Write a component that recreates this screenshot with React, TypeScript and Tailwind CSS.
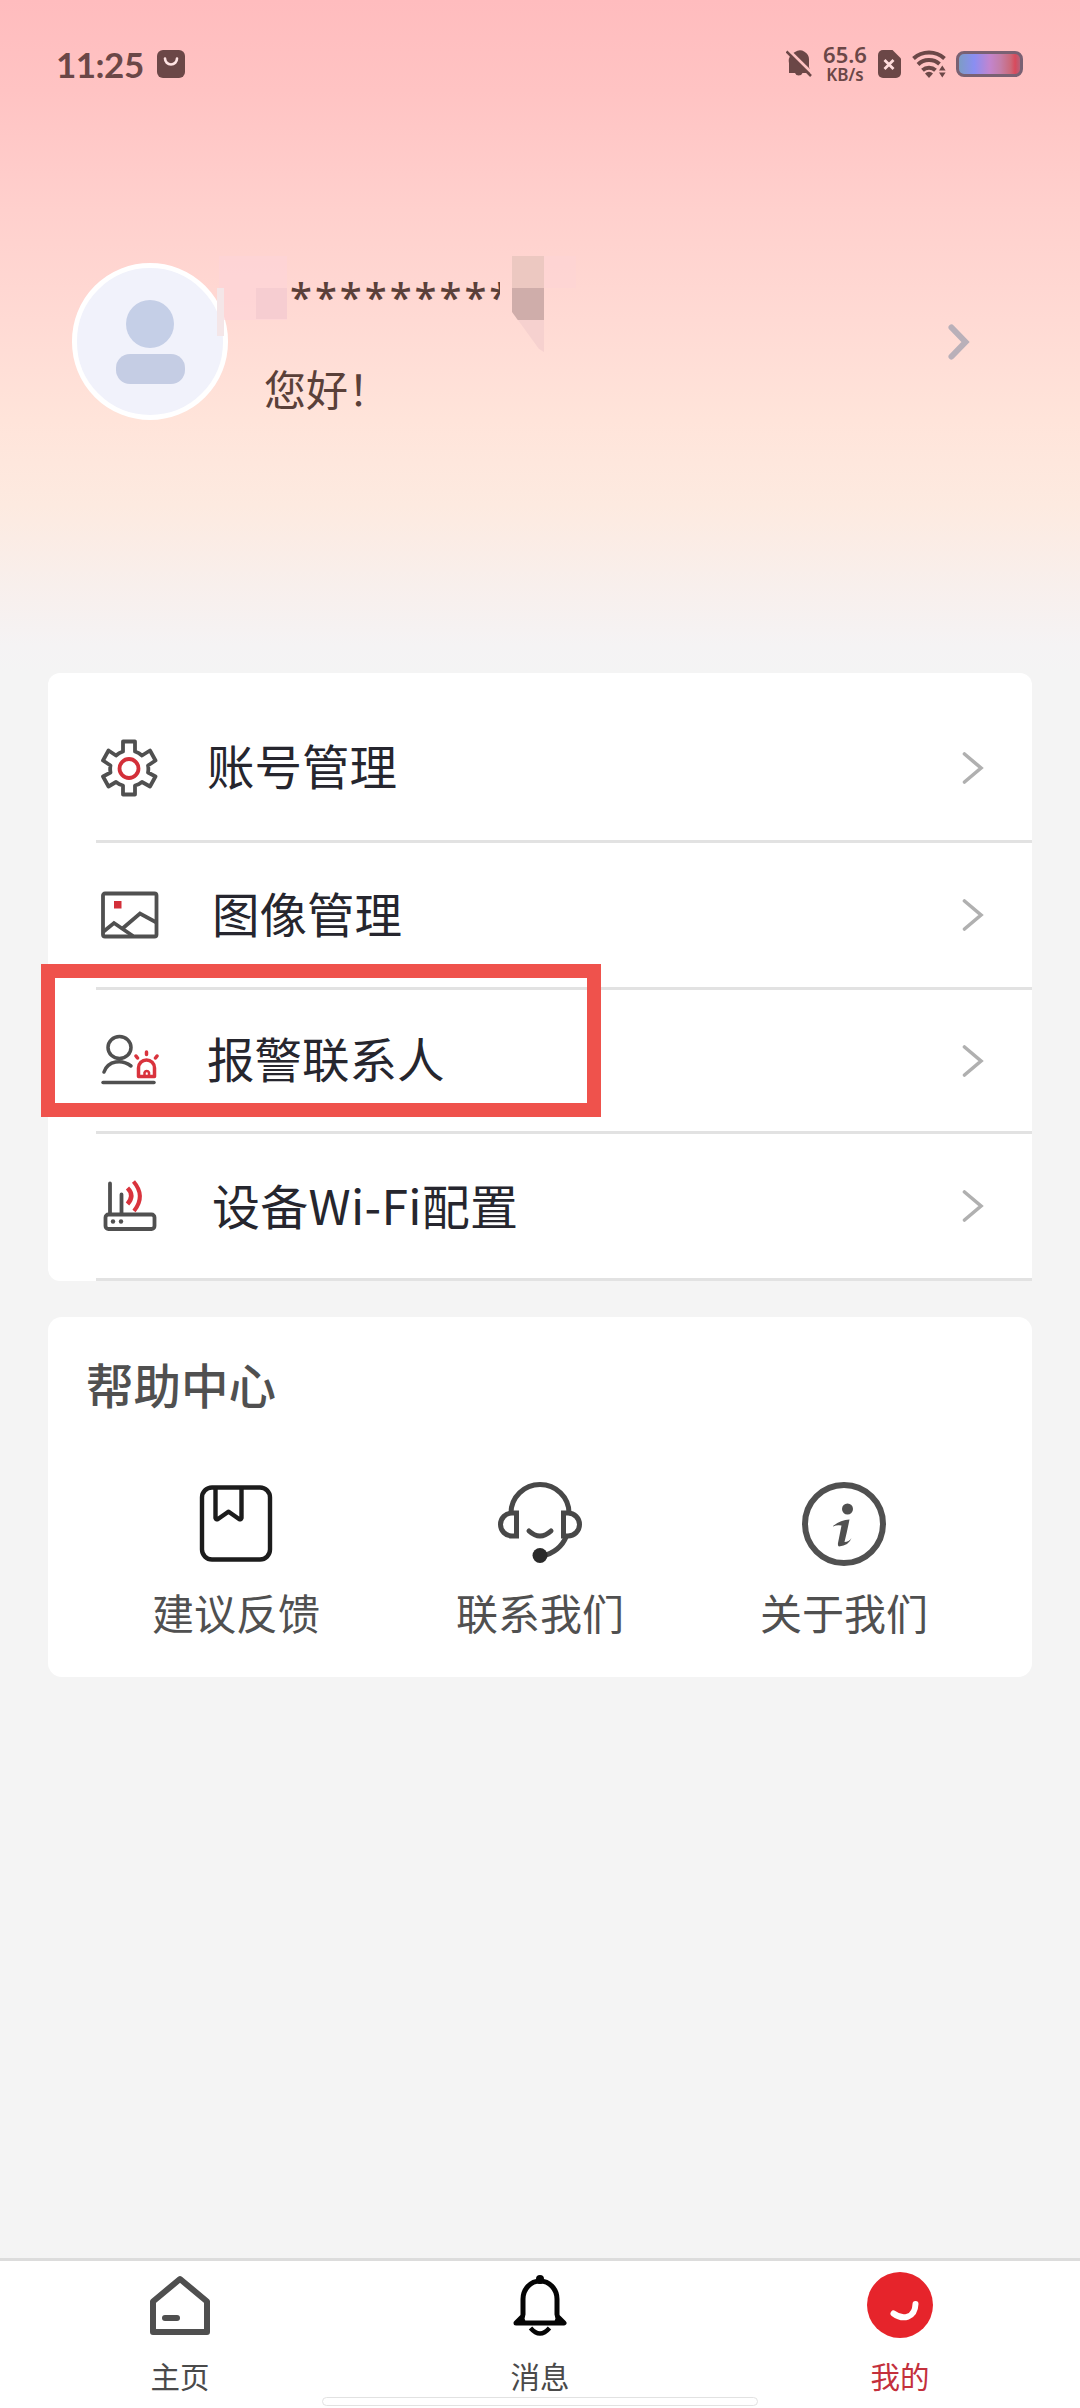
import React from 'react';

const cjk = "font-['Noto_Sans_CJK_SC',sans-serif]";

function StatusBar() {
  return (
    <div className="flex h-16 items-center pl-[56px] pr-[57px] text-[#6b4747] mt-8">
      <span className="w-[88px] whitespace-nowrap font-['Lato',sans-serif] text-[35px] font-bold leading-none tracking-[-0.5px]">11:25</span>
      <svg className="ml-[13px]" width="28" height="28" viewBox="0 0 28 28">
        <rect width="28" height="28" rx="6" fill="currentColor" />
        <path d="M8 8.500a6 6 0 0 0 12 0" fill="none" stroke="#ffe3e3" strokeWidth="2.600" strokeLinecap="round" />
      </svg>
      <svg className="ml-auto" width="26" height="28" viewBox="0 0 26 28">
        <path d="M3 23V13a10 9.500 0 0 1 6-11a9 9 0 0 1 14 8V17l2 6H16.500a4 4 0 0 1-7.500 0Z" fill="currentColor" />
        <path d="M2.500 0L27 24" stroke="#ffc3c3" strokeWidth="3" />
        <path d="M0.500 1.500L25 26" stroke="currentColor" strokeWidth="2.500" />
      </svg>
      <div className="ml-2.5 flex w-[46px] flex-col items-center whitespace-nowrap font-['Noto_Sans',sans-serif] font-semibold">
        <span className="text-[22px] leading-[21px]">65.6</span>
        <span className="text-[17px] leading-[19px]">KB/s</span>
      </div>
      <svg className="ml-2.5" width="23" height="28" viewBox="0 0 23 28">
        <path d="M5 0H14.500L23 8.500V23a5 5 0 0 1-5 5H5a5 5 0 0 1-5-5V5a5 5 0 0 1 5-5Z" fill="currentColor" />
        <path d="M6.500 10l9 9M15.500 10l-9 9" stroke="#ffdcdc" strokeWidth="2.800" />
      </svg>
      <svg className="ml-[11px]" width="35" height="28" viewBox="0 0 35 28">
        <g fill="none" stroke="currentColor" strokeWidth="4">
          <path d="M1.500 8.500a23 23 0 0 1 31 0" />
          <path d="M6 14.500a16 16 0 0 1 21.500-.5" />
          <path d="M10.500 20.300a9.500 9.500 0 0 1 13 0" />
        </g>
        <path d="M13 23.500a5.500 5.500 0 0 1 8 0L17 28Z" fill="currentColor" />
        <path d="M27 20.500l3.300-5 3.300 5ZM27 22.500l3.300 5 3.300-5Z" fill="currentColor" />
      </svg>
      <div className="ml-[9px] h-[26px] w-[67px] rounded-[8px] border-[3px] border-[#796173] bg-[linear-gradient(90deg,#7d9cc5_0%,#8a8ef2_25%,#c285cf_50%,#c47ea8_68%,#cb6878_85%,#d94a5c_92%,#b5627a_100%)]" />
    </div>
  );
}

function Profile() {
  return (
    <div className="relative mt-[160px] flex h-[170px] items-start pl-[72px]">
      <div className="mt-[7px] flex h-[157px] w-[156px] flex-col items-center rounded-full border-[5px] border-white bg-[#f1f2fb] pt-[32px]">
        <div className="h-12 w-12 rounded-full bg-[#c5cfe7]" />
        <div className="mt-[6px] h-[30px] w-[69px] rounded-[14px] bg-[#c5cde4]" />
      </div>
      <div className="absolute left-[219px] top-0 h-[64px] w-[68px] bg-[#fdd4d8]/60" />
      <div className="absolute left-[256px] top-[32px] h-[31px] w-[31px] bg-[#f6cdd1]" />
      <div className="absolute left-[217px] top-[32px] h-[48px] w-[7px] bg-[#f4e6e8]" />
      <div className="absolute left-[512px] top-0 h-[32px] w-[32px] bg-[#ecc8c1]" />
      <div className="absolute left-[512px] top-[32px] h-[32px] w-[32px] bg-[#cfadaa] [clip-path:polygon(0_0,100%_0,100%_100%,18%_100%,0_75%)]" />
      <div className="absolute left-[518px] top-[64px] h-[32px] w-[26px] bg-[#f6d1cf] [clip-path:polygon(0_0,100%_0,100%_100%,80%_90%)]" />
      <div className="absolute left-[544px] top-0 h-[32px] w-[32px] bg-[#fdd3d5]/50" />
      <div className="ml-[36px] flex flex-col text-[#5a4039]">
        <div className="ml-[26px] mt-[14px] h-[40px] w-[210px] overflow-hidden whitespace-nowrap font-['Noto_Sans',sans-serif] text-[40px] font-medium leading-[54px] tracking-[3px]">*********</div>
        <div className={`mt-[57px] text-[42px] leading-[42px] ${cjk}`}>您好！</div>
      </div>
      <svg className="ml-auto mr-[109px] mt-[66px]" width="24" height="40" viewBox="0 0 24 40">
        <path d="M4.500 5.500L18.500 20L4.500 34.500" fill="none" stroke="#b9b0b9" strokeWidth="6" strokeLinecap="round" />
      </svg>
    </div>
  );
}

const GearIcon = () => (
  <svg width="58" height="58" viewBox="0 0 58 58" fill="none">
    <path
      d="M22 2.500H34V12.500Q38 13.800 41 16.500L49 11.500L54.500 21.500L47 26.500Q47.700 30 47 33.500L54.500 37.500L49 47.500L41 43Q38 45.500 34 46.500V55.500H22V46.500Q18 45.500 15 43L7.500 47.500L2 37.500L9.500 33.500Q8.800 30 9.500 26.500L2 21.500L7.500 11.500L15 16.500Q18 13.800 22 12.500Z"
      stroke="#505050"
      strokeWidth="3.800"
      strokeLinejoin="round"
    />
    <circle cx="28" cy="29.500" r="9.500" stroke="#d32f39" strokeWidth="3.800" />
  </svg>
);

const ImageIcon = () => (
  <svg width="58" height="48" viewBox="0 0 58 48" fill="none">
    <g stroke="#505050" strokeWidth="3.800">
      <rect x="2" y="2.500" width="53.500" height="43" rx="2" />
      <path d="M2 41L13 32L32 45M21.500 37.500L39 22.500L55.500 31.500" />
    </g>
    <rect x="13" y="10" width="7.500" height="7.500" fill="#d32f39" />
  </svg>
);

const ContactIcon = () => (
  <svg width="58" height="58" viewBox="0 0 58 58" fill="none">
    <g stroke="#505050" strokeWidth="3.500" strokeLinecap="round">
      <ellipse cx="18.500" cy="15.500" rx="11.500" ry="11" />
      <path d="M3 40C7 28.500 21 27 30 34" />
      <path d="M2 50.500H53" />
    </g>
    <g stroke="#d9333d" strokeWidth="3.500" strokeLinecap="round" strokeLinejoin="round">
      <path d="M37.500 44.500V36a8 8 0 0 1 16 0V44.500H37.500Z" />
      <path d="M43.500 44V40.500a2.500 2.500 0 0 1 4.500 0V44" strokeWidth="2.500" />
      <path d="M45.500 22.500V20M36.500 26L35 24M54.500 26L56 24" />
    </g>
  </svg>
);

const RouterIcon = () => (
  <svg width="58" height="54" viewBox="0 0 58 54" fill="none">
    <g stroke="#505050" strokeWidth="3.800" strokeLinecap="round">
      <rect x="4.500" y="35.500" width="49" height="14.500" rx="3" />
      <path d="M9 35V4.500M20.500 35V15.500" />
    </g>
    <circle cx="12" cy="42.500" r="2.200" fill="#505050" />
    <circle cx="20" cy="42.500" r="2.200" fill="#505050" />
    <g stroke="#d9333d" strokeWidth="4.500">
      <path d="M26.500 9Q34 16.500 26.500 25" />
      <path d="M32.500 2.500Q45 17 33 32" strokeWidth="4" />
    </g>
  </svg>
);

function Chevron() {
  return (
    <svg className="ml-auto mr-[48px]" width="22" height="34" viewBox="0 0 22 34">
      <path d="M2.500 3L19 17L2.500 31" fill="none" stroke="#b0b0b0" strokeWidth="3.600" strokeLinecap="round" />
    </svg>
  );
}

function MenuRow({ icon, label, rowClass, labelClass }: { icon: React.ReactNode; label: string; rowClass: string; labelClass: string }) {
  return (
    <div className={`ml-12 flex items-center border-b-[3px] border-[#e2e2e2] ${rowClass}`}>
      <div className="ml-[5px] flex w-[60px] shrink-0">{icon}</div>
      <span className={`mb-[5px] whitespace-nowrap leading-[48px] text-[#26262e] ${labelClass}`}>{label}</span>
      <Chevron />
    </div>
  );
}

function Menu() {
  return (
    <div className={`relative mx-12 rounded-[12px] rounded-br-none bg-white ${cjk}`}>
      <MenuRow icon={<GearIcon />} label="账号管理" rowClass="h-[170px] pt-[22px]" labelClass="ml-[46px] text-[47.500px]" />
      <MenuRow icon={<ImageIcon />} label="图像管理" rowClass="h-[147px]" labelClass="ml-[51px] text-[47.500px]" />
      <MenuRow icon={<ContactIcon />} label="报警联系人" rowClass="h-[144px]" labelClass="ml-[46px] text-[47.500px]" />
      <MenuRow icon={<RouterIcon />} label="设备Wi-Fi配置" rowClass="h-[147px]" labelClass="ml-[51px] text-[48px] tracking-[0.3px]" />
      <div className="absolute -left-[7px] top-[291px] h-[153px] w-[560px] border-[14px] border-[#ef524c]" />
    </div>
  );
}

const BookmarkIcon = () => (
  <svg width="84" height="84" viewBox="0 0 84 84" fill="none" stroke="#1c1c1c" strokeWidth="4.400" strokeLinejoin="round">
    <rect x="8" y="5.500" width="68" height="72" rx="10" />
    <path d="M21.500 5V36Q22 38 24 37L34 30Q34.500 29.700 35 30L45 37Q47 38 47.500 36V5" />
  </svg>
);

const HeadsetIcon = () => (
  <svg width="84" height="84" viewBox="0 0 84 84" fill="none" stroke="#484848" strokeWidth="5">
    <path d="M13 31a29 28.500 0 0 1 58 0" />
    <path d="M18.500 31V54H14a11.500 11.500 0 0 1 0-23Z" />
    <path d="M65.500 31V54H70a11.500 11.500 0 0 0 0-23Z" />
    <path d="M31 49Q42 59 53 49" strokeLinecap="round" />
    <path d="M68.500 54Q62 70 44 74" />
    <circle cx="42" cy="73.500" r="7.500" fill="#2a2a2a" stroke="none" />
  </svg>
);

const InfoIcon = () => (
  <svg width="84" height="84" viewBox="0 0 84 84" fill="none">
    <circle cx="42" cy="42" r="39" stroke="#505050" strokeWidth="6" />
    <circle cx="45.500" cy="27" r="5.500" fill="#505050" />
    <path d="M31 44Q39 37.500 47.500 37.500Q45 50 42.500 60Q47 60 49.500 56Q47 63.500 37 64.500Q35.500 64 36 61L39.500 43.500Q35.500 42.500 31 44.500Z" fill="#505050" />
  </svg>
);

function HelpItem({ icon, label }: { icon: React.ReactNode; label: string }) {
  return (
    <div className="flex flex-1 flex-col items-center">
      {icon}
      <span className="mt-[25px] text-[42px] leading-[42px] text-[#505050]">{label}</span>
    </div>
  );
}

function HelpCenter() {
  return (
    <div className={`mx-12 mt-9 h-[360px] rounded-[14px] bg-white px-9 pt-[43px] ${cjk}`}>
      <div className="pl-[2px] text-[47.500px] font-medium leading-[48px] text-[#505050]">帮助中心</div>
      <div className="mt-[74px] flex">
        <HelpItem icon={<BookmarkIcon />} label="建议反馈" />
        <HelpItem icon={<HeadsetIcon />} label="联系我们" />
        <HelpItem icon={<InfoIcon />} label="关于我们" />
      </div>
    </div>
  );
}

const HomeIcon = () => (
  <svg width="66" height="66" viewBox="0 0 66 66" fill="none" stroke="#4f4f4f" strokeWidth="6" strokeLinejoin="round" strokeLinecap="round">
    <path d="M33 7L60 29.500V60H6V29.500Z" />
    <path d="M18 46H30" />
  </svg>
);

const BellIcon = () => (
  <svg width="66" height="66" viewBox="0 0 66 66" fill="none" stroke="#050505" strokeWidth="5" strokeLinejoin="round">
    <path d="M16 27a17 18 0 0 1 34 0V42.500Q50 44.500 52 46L57 51H9L14 46Q16 44.500 16 42.500Z" />
    <path d="M10 51L16 45L18 51ZM56 51L50 45L48 51Z" fill="#050505" strokeWidth="2" />
    <path d="M33 7V8" strokeWidth="8" strokeLinecap="round" />
    <path d="M23.500 56Q33 67 42.500 56" strokeWidth="4.500" />
  </svg>
);

const MineIcon = () => (
  <svg width="66" height="66" viewBox="0 0 66 66" fill="none">
    <circle cx="33" cy="33" r="33" fill="#e6242b" />
    <path d="M26.500 41.500C36 48.500 48 46 48.500 32" stroke="#fff" strokeWidth="6" strokeLinecap="round" />
  </svg>
);

function Tab({ icon, label, active }: { icon: React.ReactNode; label: string; active?: boolean }) {
  return (
    <div className="flex flex-1 flex-col items-center pt-[11px]">
      {icon}
      <span className={`mt-[22px] text-[29.500px] leading-[30px] ${active ? 'text-[#c4303c]' : 'text-[#4a4a4a]'}`}>{label}</span>
    </div>
  );
}

export default function App() {
  return (
    <div className="flex h-[2408px] w-[1080px] flex-col overflow-hidden bg-[#f4f4f4]">
      <div className="h-[673px] shrink-0 overflow-hidden bg-[linear-gradient(180deg,#ffbcbe_0px,#ffc3c3_90px,#ffd0cd_210px,#ffdad4_320px,#ffe4da_420px,#fdeae0_505px,#f8efec_585px,#f5f3f4_645px,#f4f4f4_673px)]">
        <StatusBar />
        <Profile />
      </div>
      <Menu />
      <HelpCenter />
      <div className={`relative mt-auto flex h-[150px] shrink-0 border-t-[3px] border-[#dcdcdc] bg-white ${cjk}`}>
        <Tab icon={<HomeIcon />} label="主页" />
        <Tab icon={<BellIcon />} label="消息" />
        <Tab icon={<MineIcon />} label="我的" active />
        <div className="absolute bottom-[2px] left-[322px] h-[9px] w-[436px] rounded-full border border-[#e2e2e2] bg-white" />
      </div>
    </div>
  );
}
